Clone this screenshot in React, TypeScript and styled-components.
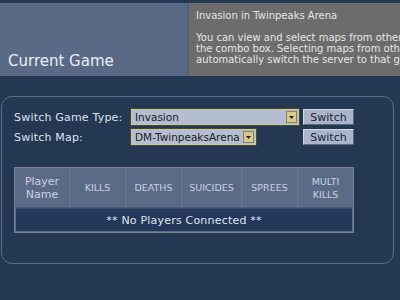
import React from "react";
import styled, { createGlobalStyle } from "styled-components";

const Global = createGlobalStyle`
  html, body { margin: 0; padding: 0; background: #243854; }
  body { width: 400px; height: 300px; overflow: hidden; font-family: "DejaVu Sans", Verdana, sans-serif; }
`;

const Page = styled.div`
  width: 400px;
  height: 300px;
  background: #243854;
  padding-top: 3px;
  box-sizing: border-box;
  display: flex;
  flex-direction: column;
`;

const Header = styled.div`
  height: 73px;
  display: flex;
  background: #5a6a86;
`;

const Title = styled.h1`
  flex: 0 0 187px;
  margin: 0;
  padding: 0 0 6px 8px;
  box-sizing: border-box;
  display: flex;
  align-items: flex-end;
  font-family: "DejaVu Sans", Verdana, sans-serif;
  font-weight: normal;
  font-size: 15px;
  color: #e8eef6;
`;

const Info = styled.div`
  flex: 1;
  min-width: 0;
  background: #6c6c6c;
  border-left: 2px solid #55617a;
  padding: 7px 0 0 7px;
  color: #e6e6e6;
  font-size: 10px;
  line-height: 11px;
  white-space: nowrap;
  overflow: hidden;
`;

const InfoPara = styled.p`
  margin: 0 0 11px 0;
`;

const Panel = styled.div`
  margin: 20px 6px 0 1px;
  height: 168px;
  border: 1px solid #566d90;
  border-radius: 11px;
  padding: 12px 12px 0 12px;
  box-sizing: border-box;
`;

const FormRow = styled.div`
  display: flex;
  align-items: center;
  height: 16px;
  margin-bottom: 4px;
`;

const Label = styled.span`
  width: 117px;
  flex: 0 0 117px;
  color: #dde3ec;
  font-size: 11px;
  letter-spacing: 0.2px;
`;

const Select = styled.div<{ $w: number }>`
  width: ${(p) => p.$w}px;
  height: 16px;
  box-sizing: border-box;
  border: 1px solid #c9c79a;
  outline: 1px solid #434a3a;
  background: #b5bed1;
  display: flex;
  align-items: center;
  justify-content: space-between;
  padding-left: 3px;
  color: #1a1a1a;
  font-size: 10.5px;
`;

const Arrow = styled.span`
  width: 11px;
  height: 12px;
  margin-right: 1px;
  background: #d9c98e;
  border: 1px solid #8e8050;
  box-sizing: border-box;
  display: flex;
  align-items: center;
  justify-content: center;
`;

const Button = styled.button<{ $ml: number }>`
  margin-left: ${(p) => p.$ml}px;
  width: 51px;
  height: 16px;
  padding: 0;
  background: #a9b5cb;
  border: 1px solid #d3d9e4;
  border-right-color: #5d677b;
  border-bottom-color: #5d677b;
  color: #1d2230;
  font-family: "DejaVu Sans", Verdana, sans-serif;
  font-size: 11px;
`;

const Table = styled.div`
  margin-top: 22px;
  width: 340px;
  border: 1px solid #7b8290;
  box-sizing: border-box;
`;

const HeadRow = styled.div`
  display: grid;
  grid-template-columns: 55px 56px 56px 60px 56px 1fr;
  height: 40px;
  background: #5b6a86;
`;

const HeadCell = styled.div`
  display: flex;
  align-items: center;
  justify-content: center;
  text-align: center;
  border-right: 1px solid #68768e;
  border-bottom: 1px solid #4c5a74;
  color: #c9d2e1;
  font-size: 9.5px;
  line-height: 13px;
  &:last-child { border-right: none; }
`;

const NameCell = styled(HeadCell)`
  font-size: 11px;
`;

const EmptyRow = styled.div`
  height: 22px;
  background: #23385a;
  border: 1px solid #5e6d86;
  border-top: 1px solid #3a4c68;
  display: flex;
  align-items: center;
  justify-content: center;
  color: #dfe5ee;
  font-size: 11px;
  letter-spacing: 0.2px;
`;

const ArrowIcon = () => (
  <svg width="5" height="3" viewBox="0 0 5 3">
    <path d="M0 0H5L2.5 3Z" fill="#222" />
  </svg>
);

export default function App() {
  return (
    <>
      <Global />
      <Page>
        <Header>
          <Title>Current Game</Title>
          <Info>
            <InfoPara>Invasion in Twinpeaks Arena</InfoPara>
            <InfoPara>
              You can view and select maps from other game types using
              <br />
              the combo box. Selecting maps from other game types will
              <br />
              automatically switch the server to that game type.
            </InfoPara>
          </Info>
        </Header>
        <Panel>
          <FormRow>
            <Label>Switch Game Type:</Label>
            <Select $w={168}>
              Invasion
              <Arrow>
                <ArrowIcon />
              </Arrow>
            </Select>
            <Button $ml={4}>Switch</Button>
          </FormRow>
          <FormRow>
            <Label>Switch Map:</Label>
            <Select $w={125}>
              DM-TwinpeaksArena
              <Arrow>
                <ArrowIcon />
              </Arrow>
            </Select>
            <Button $ml={47}>Switch</Button>
          </FormRow>
          <Table>
            <HeadRow>
              <NameCell>
                Player
                <br />
                Name
              </NameCell>
              <HeadCell>KILLS</HeadCell>
              <HeadCell>DEATHS</HeadCell>
              <HeadCell>SUICIDES</HeadCell>
              <HeadCell>SPREES</HeadCell>
              <HeadCell>
                MULTI
                <br />
                KILLS
              </HeadCell>
            </HeadRow>
            <EmptyRow>** No Players Connected **</EmptyRow>
          </Table>
        </Panel>
      </Page>
    </>
  );
}
